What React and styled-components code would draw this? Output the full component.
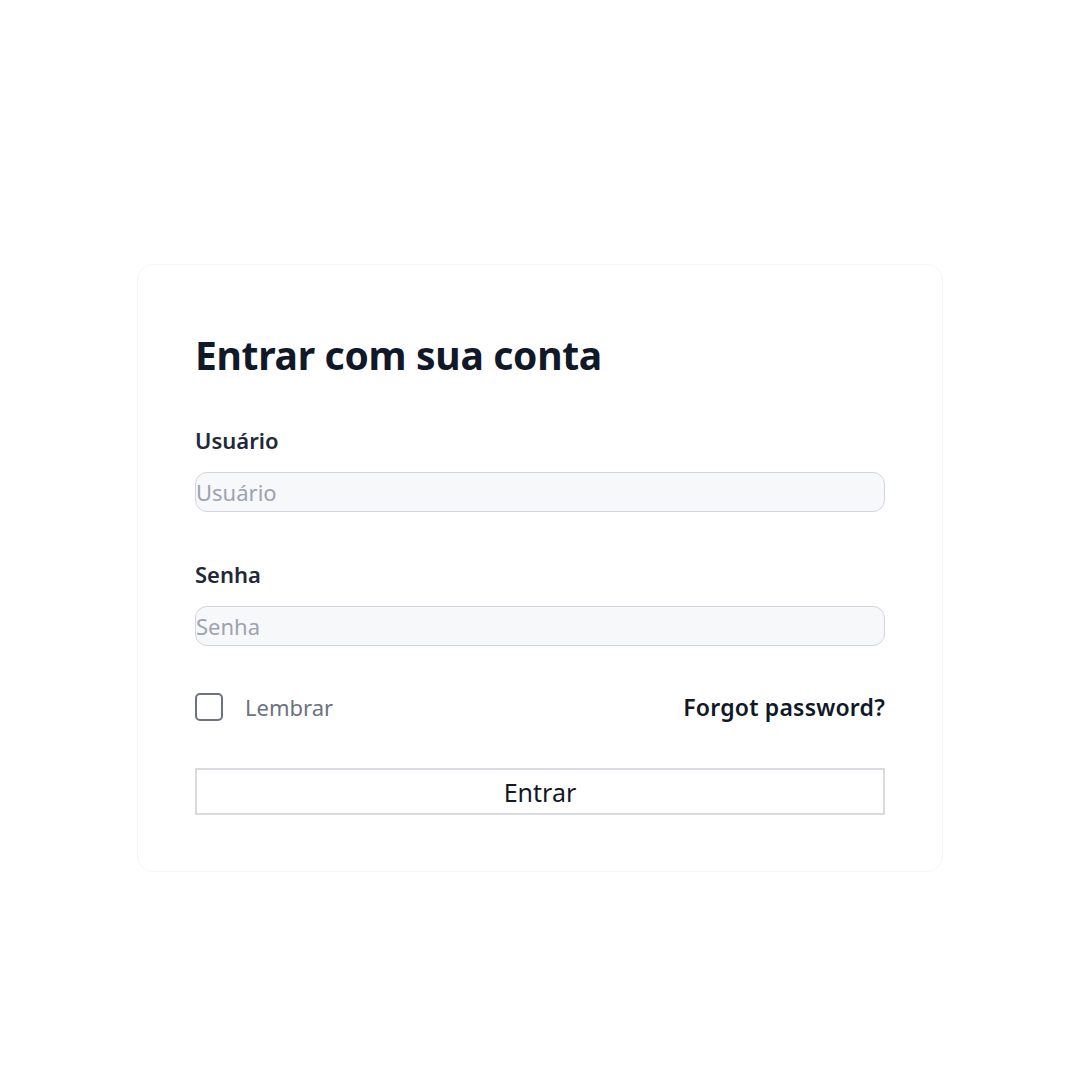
import React from "react";
import styled, { createGlobalStyle } from "styled-components";

const Global = createGlobalStyle`
  html, body { margin: 0; padding: 0; background: #ffffff; }
  body { font-family: "Noto Sans", "Open Sans", sans-serif; color: #111827; }
  * { box-sizing: border-box; }
`;

const Page = styled.div`
  width: 1080px;
  height: 1080px;
  display: flex;
  justify-content: center;
  align-items: flex-start;
  padding-top: 264px;
`;

const Card = styled.form`
  width: 806px;
  height: 608px;
  background: #fff;
  border: 1px solid #f5f5f5;
  border-radius: 16px;
  padding: 64px 57px 0 57px;
  display: flex;
  flex-direction: column;
`;

const Title = styled.h1`
  margin: 0 0 44px 0;
  font-size: 39px;
  line-height: 52px;
  font-weight: 700;
  color: #111827;
  letter-spacing: -0.3px;
`;

const Field = styled.div`
  display: flex;
  flex-direction: column;
  gap: 17px;
  margin-bottom: ${(p) => p.$mb}px;
`;

const Label = styled.label`
  font-size: 22px;
  line-height: 30px;
  font-weight: 600;
  color: #1f2937;
`;

const Input = styled.input`
  width: 100%;
  height: 40px;
  border: 1px solid #d1d5db;
  border-radius: 12px;
  background: #f7f8fa;
  padding: 0;
  font-family: inherit;
  font-size: 22px;
  color: #111827;
  outline: none;
  &::placeholder { color: #9ca3af; }
`;

const Row = styled.div`
  display: flex;
  align-items: center;
  justify-content: space-between;
  height: 30px;
  margin-bottom: 46px;
`;

const Remember = styled.label`
  display: flex;
  align-items: center;
  gap: 22px;
  font-size: 22px;
  color: #6b7280;
`;

const Box = styled.span`
  width: 28px;
  height: 28px;
  border: 2px solid #6b7280;
  border-radius: 5px;
  background: #fff;
`;

const Link = styled.a`
  font-size: 23px;
  font-weight: 600;
  letter-spacing: 0.2px;
  color: #111827;
  text-decoration: none;
`;

const Button = styled.button`
  width: 100%;
  height: 47px;
  border: 2px solid #d9dbe0;
  background: #fff;
  font-family: inherit;
  font-size: 25px;
  color: #111827;
  cursor: pointer;
`;

export default function App() {
  return (
    <>
      <Global />
      <Page>
        <Card onSubmit={(e) => e.preventDefault()}>
          <Title>Entrar com sua conta</Title>
          <Field $mb={47}>
            <Label>Usuário</Label>
            <Input placeholder="Usuário" />
          </Field>
          <Field $mb={46}>
            <Label>Senha</Label>
            <Input type="password" placeholder="Senha" />
          </Field>
          <Row>
            <Remember>
              <Box />
              Lembrar
            </Remember>
            <Link href="#">Forgot password?</Link>
          </Row>
          <Button type="submit">Entrar</Button>
        </Card>
      </Page>
    </>
  );
}
